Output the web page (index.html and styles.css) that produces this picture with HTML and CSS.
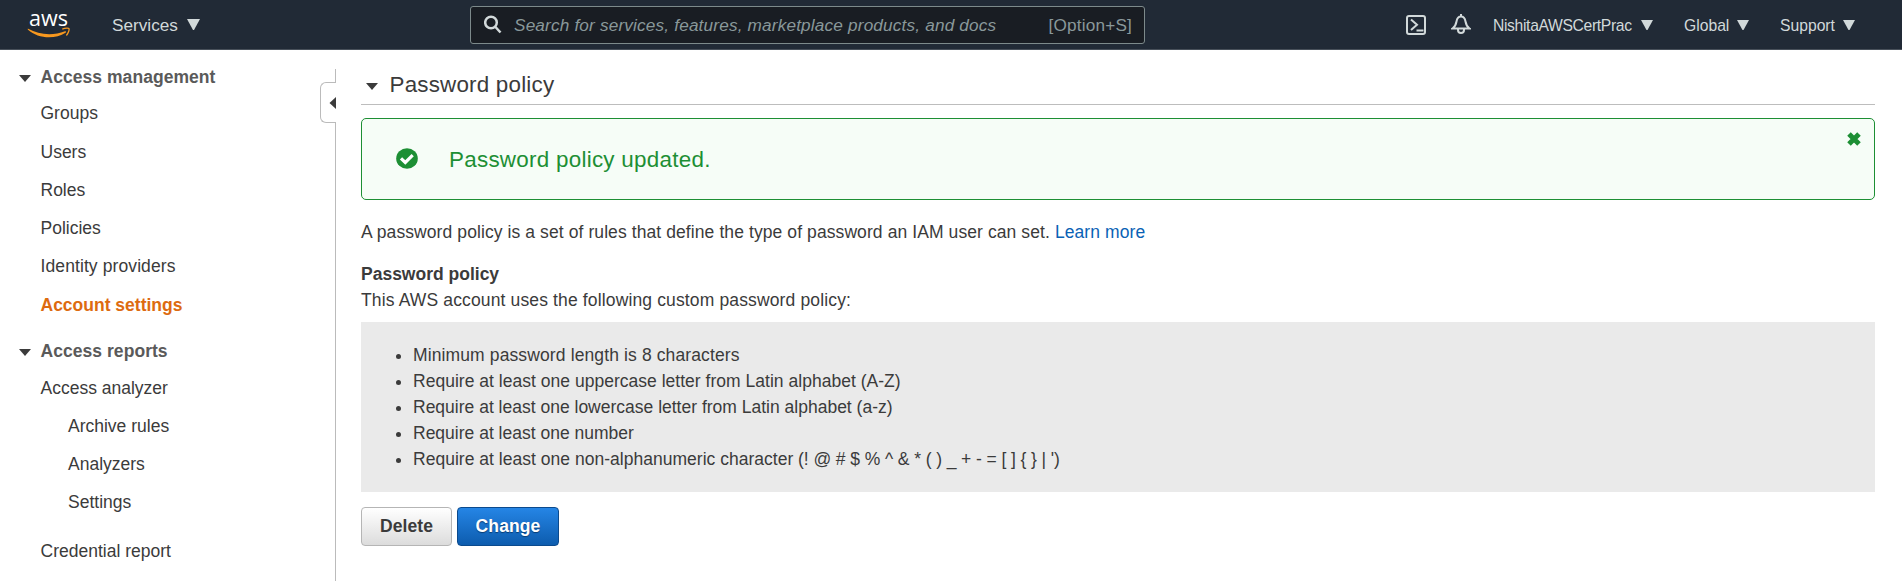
FILE: index.html
```
<!DOCTYPE html>
<html lang="en">
<head>
<meta charset="utf-8">
<title>IAM - Account settings</title>
<link rel="stylesheet" href="styles.css">
</head>
<body>
<header class="topbar">
  <svg class="logo" width="46" height="32" viewBox="0 0 46 32">
    <text class="logo-text" x="2" y="16.500" textLength="39" lengthAdjust="spacingAndGlyphs">aws</text>
    <path d="M1.200 19.800C12 26 26 27 38 22.300C39.200 21.900 39.600 23 38.500 23.700C28 30.500 11 29.800 1 20.700C0.400 20 0.700 19.500 1.200 19.800z" fill="#f7981f"/>
    <path d="M35.300 20.200C38.500 18.800 41.600 18.900 42 19.600C42.500 20.600 41.400 24.200 39.400 26.500" fill="none" stroke="#f7981f" stroke-width="1.300"/>
  </svg>
  <div class="menu services"><span class="menu-label">Services</span><svg class="caret" width="13" height="11"><path d="M0 0h13l-6 11h-1z"/></svg></div>
  <div class="search">
    <svg width="18" height="20" viewBox="0 0 18 20"><circle cx="7" cy="7.500" r="5.800"/><path d="M11 11.500l5.500 6"/></svg>
    <span class="search-hint">Search for services, features, marketplace products, and docs</span>
    <span class="search-key">[Option+S]</span>
  </div>
  <div class="account">
    <svg class="shell" width="20" height="20" viewBox="0 0 20 20"><rect x="1" y="1" width="18" height="18" rx="2"/><path d="M5 4.500l6 5.300-6 5.300M10.500 15.500h7"/></svg>
    <svg class="bell" width="20" height="21" viewBox="0 0 20 21"><path d="M10 0v2M1.500 14.500h17C15.500 12.500 15 10.500 14.500 7.500C14 4.500 12.500 2.500 10 2.500S6 4.500 5.500 7.500C5 10.500 4.500 12.500 1.500 14.500zM7 15v1a3 3 0 0 0 6 0v-1"/></svg>
    <div class="menu user"><span class="menu-label">NishitaAWSCertPrac</span><svg class="caret" width="12" height="10"><path d="M0 0h12l-5.500 10h-1z"/></svg></div>
    <div class="menu region"><span class="menu-label">Global</span><svg class="caret" width="12" height="10"><path d="M0 0h12l-5.500 10h-1z"/></svg></div>
    <div class="menu support"><span class="menu-label">Support</span><svg class="caret" width="12" height="10"><path d="M0 0h12l-5.500 10h-1z"/></svg></div>
  </div>
</header>
<div class="page">
  <nav class="sidebar">
    <div class="group"><svg class="tri" width="12" height="7"><path d="M0 0h12l-6 7z"/></svg><span>Access management</span></div>
    <a class="item first">Groups</a>
    <a class="item">Users</a>
    <a class="item">Roles</a>
    <a class="item">Policies</a>
    <a class="item wide">Identity providers</a>
    <a class="item active">Account settings</a>
    <div class="group second"><svg class="tri" width="12" height="7"><path d="M0 0h12l-6 7z"/></svg><span>Access reports</span></div>
    <a class="item">Access analyzer</a>
    <a class="item sub">Archive rules</a>
    <a class="item sub">Analyzers</a>
    <a class="item sub">Settings</a>
    <a class="item last">Credential report</a>
  </nav>
  <div class="divider">
    <div class="line-top"></div>
    <div class="handle"><svg class="arrow" width="7" height="12"><path d="M7 0v12l-6.500-6z"/></svg></div>
    <div class="line-bottom"></div>
  </div>
  <main class="content">
    <h1 class="title"><svg class="tri" width="12" height="7"><path d="M0 0h12l-6 7z"/></svg><span>Password policy</span></h1>
    <div class="alert">
      <svg class="check" width="22" height="21" viewBox="0 0 22 21"><ellipse cx="11" cy="10.500" rx="10.800" ry="10.200"/><path d="M5 10.300l4.300 4.200 7.400-7.300"/></svg>
      <span class="alert-text">Password policy updated.</span>
      <svg class="close" width="14" height="14" viewBox="0 0 14 14"><path d="M2 2l10 10M12 2L2 12"/></svg>
    </div>
    <p class="intro">A password policy is a set of rules that define the type of password an IAM user can set. <a class="link">Learn more</a></p>
    <h2 class="subtitle">Password policy</h2>
    <p class="lead">This AWS account uses the following custom password policy:</p>
    <ul class="rules">
      <li><span class="rule-wide">Minimum password length is 8 characters</span></li>
      <li><span class="rule">Require at least one uppercase letter from Latin alphabet (A-Z)</span></li>
      <li><span>Require at least one lowercase letter from Latin alphabet (a-z)</span></li>
      <li><span>Require at least one number</span></li>
      <li><span class="rule">Require at least one non-alphanumeric character</span><span class="symbols"> (! @ # $ % ^ &amp; * ( ) _ + - = [ ] { } | ')</span></li>
    </ul>
    <div class="actions"><button class="btn">Delete</button><button class="btn primary">Change</button></div>
  </main>
</div>
</body>
</html>
```
FILE: styles.css
```
* { box-sizing: border-box; }
body { margin: 0; height: 581px; overflow: hidden; background: #fff; color: #3b3b3b; font-family: "Liberation Sans", Arial, sans-serif; font-size: 17.5px; }
svg { flex: none; display: block; }
.topbar { height: 50px; display: flex; align-items: center; background: #212a36; border-bottom: 1px solid #48505a; color: #d2d9da; }
.logo { margin-left: 27px; overflow: visible; }
.logo-text { font-family: "Open Sans", sans-serif; font-weight: 500; font-size: 22px; fill: #fff; }
.menu { display: flex; align-items: center; white-space: nowrap; font-size: 16px; }
.menu-label { position: relative; top: 1px; }
.caret { fill: #d2d9da; }
.services { margin-left: 39px; width: 88px; justify-content: space-between; font-size: 17.2px; }
.search { margin-left: 270px; width: 675px; height: 38px; flex: none; display: flex; align-items: center; border: 1px solid #7d8a8b; border-radius: 3px; background: #191d23; padding: 0 12px 0 13px; color: #89989a; font-size: 17.2px; }
.search svg { fill: none; stroke: #d2d9da; stroke-width: 2.5; }
.search-hint { font-style: italic; margin-left: 12px; white-space: nowrap; letter-spacing: 0.17px; position: relative; top: 1px; }
.search-key { margin-left: auto; letter-spacing: 0.17px; position: relative; top: 1px; }
.account { margin-left: auto; margin-right: 47px; display: flex; align-items: center; }
.account > svg { fill: none; stroke: #d2d9da; stroke-width: 2; }
.bell { margin-left: 25px; }
.user { margin-left: 22px; width: 160px; justify-content: space-between; font-size: 15.7px; letter-spacing: -0.35px; }
.region { margin-left: 31px; width: 65px; justify-content: space-between; font-size: 15.7px; }
.support { margin-left: 31px; width: 75px; justify-content: space-between; font-size: 15.7px; }
.page { display: flex; height: 531px; }
.sidebar { width: 320px; padding-top: 10px; flex: none; }
.group { height: 34px; display: flex; align-items: center; padding-left: 19px; gap: 9.5px; font-weight: bold; color: #5a5a5a; letter-spacing: 0.05px; }
.tri { fill: #3b3b3b; position: relative; top: 1px; }
.second { height: 35px; margin-top: 11px; }
.item { display: block; height: 38px; line-height: 38px; padding-left: 40.5px; }
.first { height: 39px; }
.wide { letter-spacing: 0.1px; }
.active { color: #dd6b10; font-weight: bold; position: relative; top: 1px; }
.sub { padding-left: 68px; }
.last { margin-top: 11px; }
.divider { width: 16px; flex: none; padding-top: 19px; display: flex; flex-direction: column; }
.line-top { height: 13px; border-right: 1px solid #bbb; }
.handle { height: 41px; border: 1px solid #bbb; border-right: 0; border-radius: 6px 0 0 6px; display: flex; align-items: center; justify-content: flex-end; }
.arrow { fill: #3b3b3b; }
.line-bottom { flex: 1; border-right: 1px solid #bbb; }
.content { width: 1514px; margin-left: 25px; }
.title { margin: 0; height: 55px; padding: 14px 0 0 5px; border-bottom: 1px solid #bdbdbd; display: flex; align-items: flex-start; gap: 11.5px; font-size: 22.4px; font-weight: normal; line-height: 42px; letter-spacing: 0.2px; }
.title .tri { margin-top: 18px; }
.alert { margin-top: 13px; height: 82px; border: 1px solid #1d8f34; border-radius: 5px; background: #f6fdf7; display: flex; align-items: center; padding: 0 13px 0 34px; color: #1d8f34; }
.check { fill: #1d8f34; position: relative; top: -1px; }
.check path { fill: none; stroke: #fff; stroke-width: 3.2; }
.alert-text { margin-left: 31px; font-size: 22.4px; letter-spacing: 0.27px; position: relative; top: 1px; }
.close { margin: 13px 0 0 auto; align-self: flex-start; fill: none; stroke: #1d8f34; stroke-width: 5; overflow: visible; }
.intro { margin: 19px 0 0; line-height: 26px; letter-spacing: 0.09px; }
.link { color: #0a62b5; }
.subtitle { margin: 16px 0 0; font-size: 17.5px; line-height: 26px; }
.lead { margin: 0; line-height: 26px; letter-spacing: 0.14px; }
.rules { margin: 9px 0 0; height: 170px; background: #eaeaea; padding: 20px 0 0 52px; line-height: 26px; }
.rule-wide { letter-spacing: 0.12px; }
.rule { letter-spacing: 0.02px; }
.symbols { letter-spacing: -0.09px; }
.actions { margin-top: 15px; display: flex; gap: 5px; }
.btn { height: 39px; width: 91px; border: 1px solid #b5b5b5; border-radius: 4px; background: linear-gradient(#fff, #dcdcdc); color: #3b3b3b; font: bold 17.5px "Liberation Sans", Arial, sans-serif; padding: 0; letter-spacing: 0.1px; }
.primary { width: 102px; border-color: #0b4a8d; background: linear-gradient(#2585e5, #0d5cae); color: #fff; text-shadow: 0 1px 1px #083c73; }
```
